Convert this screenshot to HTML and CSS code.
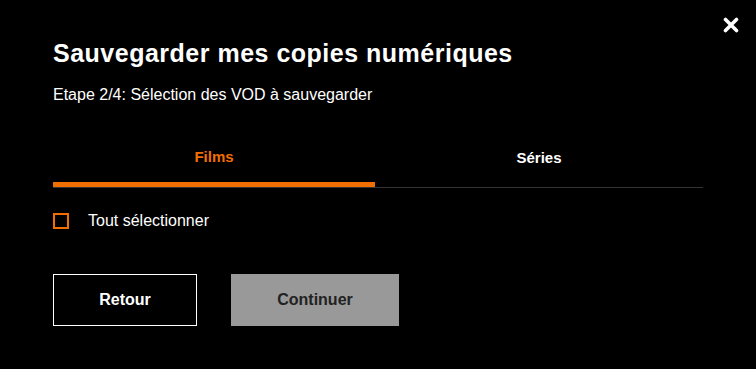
FILE: index.html
```html
<!DOCTYPE html>
<html lang="fr">
<head>
    <meta charset="UTF-8">
    <title>Sauvegarder mes copies numériques</title>
    <link rel="stylesheet" href="styles.css">
</head>
<body>
    <div class="modal">
        <button class="close" aria-label="Fermer">
            <svg width="16" height="16" viewBox="0 0 16 16"><path d="M2.5 2.5 L13.5 13.5 M13.5 2.5 L2.5 13.5" stroke="#fff" stroke-width="3.6" stroke-linecap="round"/></svg>
        </button>
        <h1>Sauvegarder mes copies numériques</h1>
        <p class="step">Etape 2/4: Sélection des VOD à sauvegarder</p>

        <div class="tabs">
            <div class="tab active">Films</div>
            <div class="tab">Séries</div>
        </div>

        <label class="check">
            <span class="box"></span> Tout sélectionner
        </label>

        <div class="actions">
            <button class="btn btn-back">Retour</button>
            <button class="btn btn-next">Continuer</button>
        </div>
    </div>
</body>
</html>
```

FILE: styles.css
```css
body { margin: 0; background: #000; color: #fff; font-family: "Liberation Sans", Arial, sans-serif; }
.modal { position: relative; padding: 37px 53px 0 53px; }
.close { position: absolute; top: 17px; right: 17px; background: none; border: none; padding: 0; cursor: pointer; }
h1 { margin: 0; font-size: 25px; font-weight: bold; line-height: 32px; letter-spacing: 0.5px; }
.step { margin: 16px 0 0; font-size: 16px; line-height: 20px; }
.tabs { display: flex; margin-top: 34px; border-bottom: 1px solid #333; }
.tab { flex: 1; text-align: center; font-size: 15px; font-weight: bold; height: 48px; line-height: 20px; padding-top: 9px; box-sizing: border-box; }
.tab.active { flex: 0 0 322px; padding-top: 8px; color: #f16e00; border-bottom: 5px solid #f16e00; }
.check { display: flex; align-items: center; gap: 19px; margin-top: 25px; font-size: 16px; line-height: 16px; }
.box { width: 12px; height: 12px; border: 2px solid #f16e00; }
.actions { display: flex; gap: 34px; margin-top: 45px; }
.btn { height: 52px; font-family: inherit; font-size: 16px; font-weight: bold; cursor: pointer; }
.btn-back { width: 144px; background: #000; color: #fff; border: 1px solid #fff; }
.btn-next { width: 168px; background: #999; color: #222; border: none; }
```
